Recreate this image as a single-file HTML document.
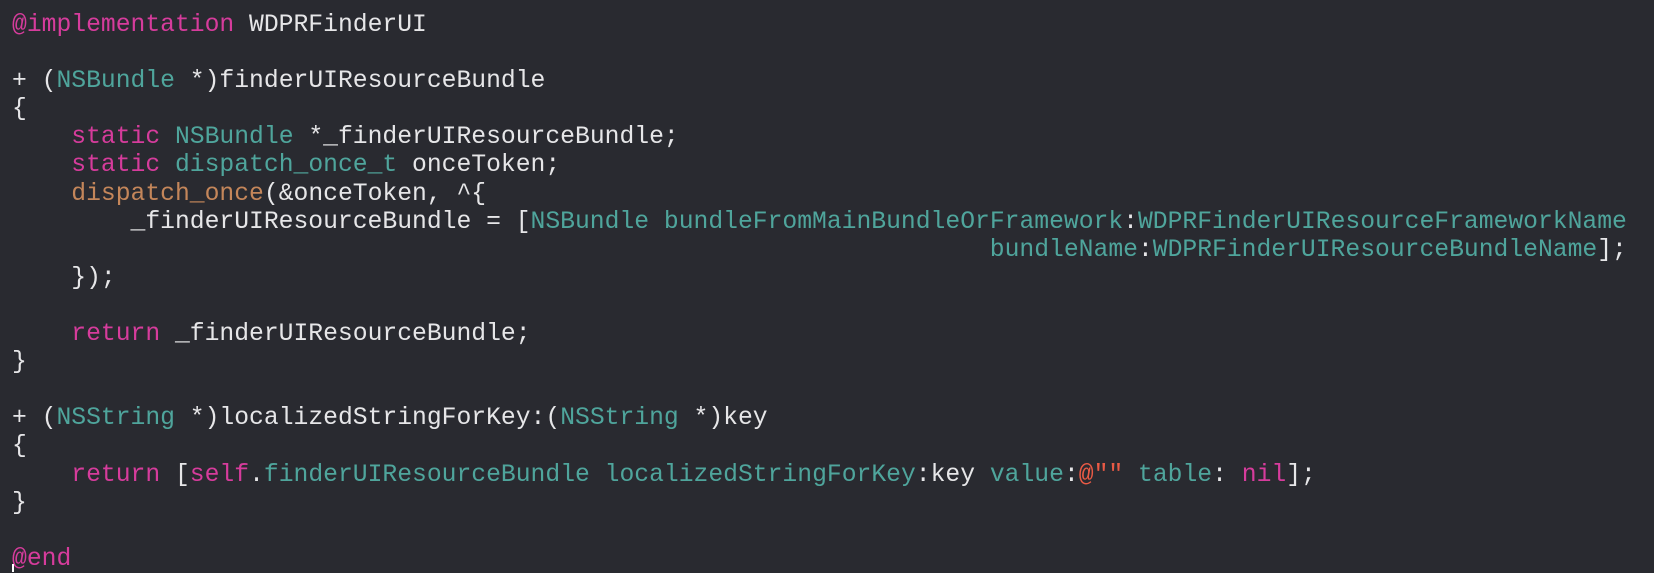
<!DOCTYPE html>
<html><head><meta charset="utf-8"><style>
html,body{margin:0;padding:0;background:#292a30;width:1654px;height:572px;overflow:hidden}
pre{margin:0;position:absolute;left:12px;top:11px;font-family:"Liberation Mono",monospace;font-size:24.7px;line-height:28.1px;color:#e6e6e8;white-space:pre}
.k{color:#d63c9c}.t{color:#4fa59c}.o{color:#c4865a}.s{color:#ea5a45}
.cur{position:absolute;left:12px;top:564px;width:2px;height:8px;background:#fff}
</style></head><body>
<pre><span class="k">@implementation</span> WDPRFinderUI

+ (<span class="t">NSBundle</span> *)finderUIResourceBundle
{
    <span class="k">static</span> <span class="t">NSBundle</span> *_finderUIResourceBundle;
    <span class="k">static</span> <span class="t">dispatch_once_t</span> onceToken;
    <span class="o">dispatch_once</span>(&amp;onceToken, ^{
        _finderUIResourceBundle = [<span class="t">NSBundle</span> <span class="t">bundleFromMainBundleOrFramework</span>:<span class="t">WDPRFinderUIResourceFrameworkName</span>
                                                                  <span class="t">bundleName</span>:<span class="t">WDPRFinderUIResourceBundleName</span>];
    });

    <span class="k">return</span> _finderUIResourceBundle;
}

+ (<span class="t">NSString</span> *)localizedStringForKey:(<span class="t">NSString</span> *)key
{
    <span class="k">return</span> [<span class="k">self</span>.<span class="t">finderUIResourceBundle</span> <span class="t">localizedStringForKey</span>:key <span class="t">value</span>:<span class="s">@""</span> <span class="t">table</span>: <span class="k">nil</span>];
}

<span class="k">@end</span></pre>
<div class="cur"></div>
</body></html>
